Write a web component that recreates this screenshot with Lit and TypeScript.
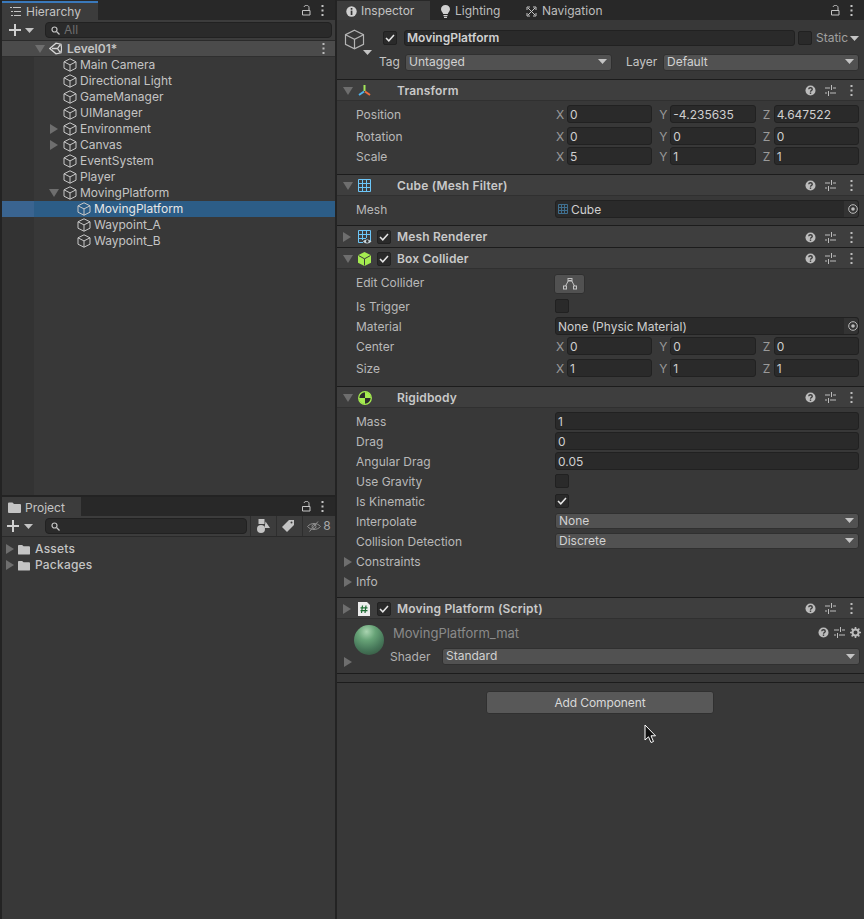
import { LitElement, html, css } from "lit";
import { customElement } from "lit/decorators.js";

const triD = (c = "#6e6e6e") => html`<svg class="ic" width="10" height="8" viewBox="0 0 10 8"><path d="M0 0H10L5 8Z" fill=${c}/></svg>`;
const triR = (c = "#6e6e6e") => html`<svg class="ic" width="8" height="10" viewBox="0 0 8 10"><path d="M0 0V10L8 5Z" fill=${c}/></svg>`;
const triS = (c = "#c4c4c4") => html`<svg class="ic" width="9" height="5" viewBox="0 0 9 5"><path d="M0 0H9L4.5 5Z" fill=${c}/></svg>`;
const cube = (s = 14, c = "#c8c8c8", sw = 1) => html`<svg class="ic" width=${s} height=${s} viewBox="0 0 14 14" fill="none" stroke=${c} stroke-width=${sw}><path d="M7 .8 13 3.800V10.200L7 13.200 1 10.200V3.800Z M1 3.800 7 6.900 13 3.800 M7 6.900V13.200"/></svg>`;
const help = () => html`<svg class="ic" width="11" height="11" viewBox="0 0 11 11"><circle cx="5.500" cy="5.500" r="5" fill="#bcbcbc"/><path d="M3.700 4.200C3.800 2.200 7.300 2.300 7.300 4.200 7.300 5.400 5.500 5.300 5.500 6.700" fill="none" stroke="#3a3a3a" stroke-width="1.300"/><rect x="4.800" y="7.500" width="1.400" height="1.400" fill="#3a3a3a"/></svg>`;
const sliders = () => html`<svg class="ic" width="11" height="11" viewBox="0 0 11 11" fill="#bcbcbc"><rect x="0" y="2.500" width="5" height="1"/><rect x="8" y="2.500" width="3" height="1"/><rect x="6" y="0" width="1" height="5"/><rect x="0" y="7.500" width="2" height="1"/><rect x="5" y="7.500" width="6" height="1"/><rect x="3" y="6" width="1" height="5"/></svg>`;
const dots = (c = "#bcbcbc") => html`<svg class="ic" width="3" height="11" viewBox="0 0 3 11" fill=${c}><rect x=".5" y="0" width="2" height="2"/><rect x=".5" y="4.500" width="2" height="2"/><rect x=".5" y="9" width="2" height="2"/></svg>`;
const lock = () => html`<svg class="ic" width="9" height="11" viewBox="0 0 9 11" fill="none" stroke="#c4c4c4"><path d="M.5 5.500H8V10H.5Z"/><path d="M7 5V2.500C7 -.2 2.500 -.2 2 2"/></svg>`;
const plus = () => html`<svg class="ic" width="12" height="12" viewBox="0 0 12 12" fill="#d0d0d0"><rect x="5" width="2" height="12"/><rect y="5" width="12" height="2"/></svg>`;
const searchIc = () => html`<svg class="ic" width="9" height="9" viewBox="0 0 9 9" fill="none" stroke="#c4c4c4" stroke-width="1.200"><circle cx="3.500" cy="3.500" r="2.500"/><path d="M5.500 5.500 8.500 8.500"/></svg>`;
const folder = (w = 13) => html`<svg class="ic" width=${w} height="11" viewBox="0 0 13 11" fill="#c4c4c4"><path d="M0 1.500Q0 .5 1 .5H4.500L6 2H12Q13 2 13 3V10Q13 11 12 11H1Q0 11 0 10Z"/></svg>`;
const unity = () => html`<svg class="ic" width="13" height="13" viewBox="0 0 13 13" fill="none" stroke="#d6d6d6" stroke-width="1.300"><path d="M.8 6.500 7 1.200 12 2.200 12.600 6.500 12 10.800 7 11.800Z M3 6.500H8.500L11 2.800 M8.500 6.500 11 10.200"/></svg>`;
const hierIc = () => html`<svg class="ic" width="11" height="9" viewBox="0 0 11 9" fill="#c4c4c4"><rect x="0" y="0" width="2" height="1"/><rect x="3" y="0" width="8" height="1"/><rect x="1" y="4" width="2" height="1"/><rect x="4" y="4" width="7" height="1"/><rect x="1" y="8" width="2" height="1"/><rect x="4" y="8" width="7" height="1"/></svg>`;
const info = () => html`<svg class="ic" width="11" height="11" viewBox="0 0 11 11"><circle cx="5.500" cy="5.500" r="5.200" fill="#d0d0d0"/><rect x="4.700" y="2" width="1.700" height="1.700" fill="#333"/><rect x="4.700" y="4.600" width="1.700" height="4.400" fill="#333"/></svg>`;
const bulb = () => html`<svg class="ic" width="9" height="13" viewBox="0 0 9 13" fill="#d0d0d0"><path d="M4.500 0C1.800 0 0 1.900 0 4.300 0 6.200 1.700 7.300 2.200 9H6.800C7.300 7.300 9 6.200 9 4.300 9 1.900 7.200 0 4.500 0Z"/><rect x="2.500" y="10" width="4" height="1.200"/><rect x="3" y="11.800" width="3" height="1.200"/></svg>`;
const navIc = () => html`<svg class="ic" width="11" height="11" viewBox="0 0 11 11" fill="none" stroke="#c4c4c4"><path d="M1 4V1H4 M7 1H10V4 M10 7V10H7 M4 10H1V7 M2 2 9 9 M9 2 2 9"/></svg>`;
const transformIc = () => html`<svg class="ic" width="13" height="13" viewBox="0 0 13 13" fill="none" stroke-width="2"><path d="M6.500 7V1" stroke="#a3e75a"/><path d="M6 7.500 1 11" stroke="#4fb4ef"/><path d="M7 7.500 12 11" stroke="#ef6e3c"/></svg>`;
const gridIc = () => html`<svg class="ic" width="13" height="13" viewBox="0 0 13 13" fill="none" stroke="#6cc6f8"><path d="M.5 .5H12.500V12.500H.5Z M4.500 .5V12.500 M8.500 .5V12.500 M.5 4.500H12.500 M.5 8.500H12.500"/></svg>`;
const rendererIc = () => html`<svg class="ic" width="14" height="14" viewBox="0 0 14 14" fill="none"><path stroke="#6cc6f8" d="M.5 .5H12.500V11 M.5 .5V12.500H5 M4.500 .5V10 M8.500 .5V8 M.5 4.500H12.500 M.5 8.500H8"/><path d="M5 11.500C7 8.800 11 8.800 13.500 11.500 11 14 7 14 5 11.500Z" fill="#c8d6de"/><circle cx="9.300" cy="11.400" r="1.300" fill="#333"/></svg>`;
const boxIc = () => html`<svg class="ic" width="13" height="14" viewBox="0 0 13 14"><path d="M6.500 0 13 3.300V10.700L6.500 14 0 10.700V3.300Z" fill="#a5ec50"/><path d="M.5 3.500 6.500 6.800 12.500 3.500 M6.500 6.800V13.500" fill="none" stroke="#3a3a3a"/></svg>`;
const rigidIc = () => html`<svg class="ic" width="14" height="14" viewBox="0 0 14 14"><circle cx="7" cy="7" r="6.300" fill="#2c2c2c" stroke="#a5ec50" stroke-width="1.300"/><path d="M7 1A6 6 0 0 1 13 7H7Z M7 13A6 6 0 0 1 1 7H7Z" fill="#a5ec50"/></svg>`;
const scriptIc = () => html`<svg class="ic" width="12" height="14" viewBox="0 0 12 14"><path d="M0 0H9L12 3V14H0Z" fill="#ececec"/><path d="M4.500 3.500 3.500 11 M8 3.500 7 11 M2.500 5.800H9.500 M2.500 8.700H9.500" stroke="#1d6b33" stroke-width="1.200" fill="none"/></svg>`;
const check = () => html`<svg class="ic" width="10" height="8" viewBox="0 0 10 8" fill="none" stroke="#e6e6e6" stroke-width="1.500"><path d="M1 4 3.800 6.800 9 1"/></svg>`;
const target = () => html`<svg class="ic" width="10" height="10" viewBox="0 0 10 10"><circle cx="5" cy="5" r="4.300" fill="none" stroke="#bcbcbc"/><circle cx="5" cy="5" r="1.800" fill="#bcbcbc"/></svg>`;
const gear = () => html`<svg class="ic" width="11" height="11" viewBox="0 0 11 11"><circle cx="5.500" cy="5.500" r="3" fill="none" stroke="#bcbcbc" stroke-width="2"/><path d="M5.500 0V11 M0 5.500H11 M1.600 1.600 9.400 9.400 M9.400 1.600 1.600 9.400" stroke="#bcbcbc" stroke-width="1.600" stroke-dasharray="2 7"/></svg>`;
const colliderIc = () => html`<svg class="ic" width="14" height="12" viewBox="0 0 14 12" fill="none" stroke="#c4c4c4"><path d="M2.500 8 5.500 2.500H8.500L11.500 8"/><rect x=".5" y="8" width="3" height="3"/><rect x="10.500" y="8" width="3" height="3"/><rect x="5" y=".5" width="4" height="2.500"/></svg>`;
const shapesIc = () => html`<svg class="ic" width="13" height="14" viewBox="0 0 13 14" fill="#c4c4c4"><rect x="1.500" y="0" width="6" height="5"/><circle cx="4" cy="10" r="4"/><path d="M8.500 2.500 13 9H7.500Z"/></svg>`;
const tagIc = () => html`<svg class="ic" width="12" height="12" viewBox="0 0 12 12"><path d="M7 0H12V5L5 12 0 7Z" fill="#c4c4c4"/><circle cx="9.500" cy="2.500" r="1" fill="#3c3c3c"/></svg>`;
const eyeOff = () => html`<svg class="ic" width="14" height="11" viewBox="0 0 14 11" fill="none" stroke="#8f8f8f"><path d="M.5 5.500C4 1.500 10 1.500 13.500 5.500 10 9.500 4 9.500 .5 5.500Z"/><circle cx="7" cy="5.500" r="2"/><path d="M2.500 10.500 11 .5"/></svg>`;

type Node = { n: string; d: number; fold?: "r" | "d"; sel?: boolean };
const tree: Node[] = [
  { n: "Main Camera", d: 0 }, { n: "Directional Light", d: 0 }, { n: "GameManager", d: 0 }, { n: "UIManager", d: 0 },
  { n: "Environment", d: 0, fold: "r" }, { n: "Canvas", d: 0, fold: "r" }, { n: "EventSystem", d: 0 }, { n: "Player", d: 0 },
  { n: "MovingPlatform", d: 0, fold: "d" }, { n: "MovingPlatform", d: 1, sel: true }, { n: "Waypoint_A", d: 1 }, { n: "Waypoint_B", d: 1 },
];

@customElement("app-root")
export class AppRoot extends LitElement {
  static styles = css`
    :host { display: block; width: 864px; height: 919px; overflow: hidden; position: relative; background: #232323;
      font: 12px/16px Inter, "Liberation Sans", sans-serif; color: #c4c4c4; letter-spacing: 0; }
    * { box-sizing: border-box; }
    .ic { display: block; flex: none; }
    .root { display: flex; height: 919px; }
    .left { width: 333px; margin-left: 2px; display: flex; flex-direction: column; gap: 2px; flex: none; }
    .panel { display: flex; flex-direction: column; background: #383838; }
    .hier { height: 495px; }
    .proj { flex: 1; }
    .insp { width: 527px; margin-left: 2px; flex: none; }
    .tabbar { height: 20px; padding-top: 1px; background: #282828; display: flex; align-items: stretch; flex: none; }
    .proj .tabbar { height: 19px; padding-top: 0; }
    .tab { display: flex; align-items: center; gap: 5px; padding-left: 9px; padding-top: 1px; }
    .tab.on { background: #3c3c3c; }
    .hier .tab.on { width: 96px; border-top: 2px solid #3a79bb; padding-left: 8px; padding-top: 0; }
    .proj .tab.on { width: 79px; padding-left: 6px; gap: 4px; padding-top: 2px; }
    .insp .tab.on { width: 93px; padding-left: 9px; gap: 4px; }
    .tab.off { padding-left: 0; margin-left: 11px; color: #bdbdbd; }
    .tab.off.first { width: 74px; }
    .spring { flex: 1; }
    .tabicons { display: flex; align-items: center; gap: 10px; padding-right: 11px; padding-bottom: 1px; }
    .toolbar { height: 21px; background: #3c3c3c; border-bottom: 1px solid #2a2a2a; display: flex; align-items: center; flex: none; padding-left: 7px; }
    .proj .toolbar { padding-left: 5px; }
    .proj .toolbar .tri { margin-left: 5px; width: 27px; }
    .toolbar .tri { margin-left: 4px; width: 26px; }
    .search { height: 16px; background: #2a2a2a; border: 1px solid #212121; border-radius: 4px; display: flex; align-items: center; gap: 4px; padding-left: 5px; color: #6f6f6f; flex: none; }
    .hier .search { width: 287px; margin-left: -6px; }
    .proj .search { width: 202px; margin-left: -6px; }
    .tb { height: 20px; width: 26px; border-left: 1px solid #2e2e2e; display: flex; align-items: center; justify-content: center; gap: 2px; flex: none; }
    .tb.first { margin-left: 3px; }
    .tb.t { padding-right: 3px; }
    .tb.w { width: 33px; color: #a8a8a8; }
    .scene { height: 16px; background: #4b4b4b; border-bottom: 1px solid #2f2f2f; display: flex; align-items: center; padding-left: 33px; padding-right: 10px; font-weight: 600; flex: none; }
    .scene .u { margin: 0 5px 0 4px; }
    .tree { flex: 1; background: linear-gradient(to right, #333 32px, #383838 32px); }
    .node { height: 16px; display: flex; align-items: center; }
    .node.sel { color: #e6e6e6; background: linear-gradient(to right, #3a6490 32px, #2c5d87 32px); }
    .fold { width: 10px; display: flex; justify-content: center; flex: none; }
    .node .gap { margin-left: 4px; }
    .node .label { margin-left: 3px; }
    .assets { padding-top: 4px; }
    .assets .node { padding-left: 3px; font-weight: 500; letter-spacing: .2px; }
    .assets .fold { margin-right: 3px; }
    .assets .label { margin-left: 5px; }

    .top { height: 60px; flex: none; padding-top: 10px; display: flex; flex-direction: column; gap: 8px; }
    .toprow { display: flex; align-items: center; height: 16px; }
    .topcube { width: 46px; padding-left: 7px; display: flex; height: 16px; }
    .topcube .big { margin-top: -1px; }
    .topcube .drop { margin: 20px 0 0 -2px; }
    .name { width: 391px; height: 16px; margin-left: 7px; background: #2a2a2a; border: 1px solid #212121; border-radius: 3px; font-weight: 600; padding-left: 2px; line-height: 14px; color: #d0d0d0; }
    .static { margin-left: 3px; display: flex; align-items: center; gap: 4px; color: #a0a0a0; }
    .static .ic:last-child { margin-left: -2px; }
    .tag { padding-left: 42px; }
    .dd { height: 17px; background: #515151; border: 1px solid #303030; border-radius: 3px; display: flex; align-items: center; justify-content: space-between; padding: 0 4px 1px 3px; line-height: 14px; color: #d2d2d2; }
    .tagdd { width: 207px; margin-left: 5px; }
    .layer { margin-left: 14px; width: 37px; }
    .layerdd { width: 196px; }
    .sec { border-bottom: 1px solid #1c1c1c; }
    .hdr { height: 21px; background: #3e3e3e; border-bottom: 1px solid #303030; display: flex; align-items: center; padding-right: 11px; padding-top: 1px; }
    .hdr.closed { border-bottom: 0; }
    .hdr .t { font-weight: 600; color: #c9c9c9; letter-spacing: .17px; margin-left: 6px; }
    .hdr .slot1 { width: 21px; padding-left: 6px; display: flex; flex: none; }
    .hdr .slot3 { width: 19px; flex: none; display: flex; }
    .hdr .slot2 { width: 14px; display: flex; flex: none; }
    .hdr .ricons { margin-left: auto; display: flex; align-items: center; gap: 9px; }
    .hdr .ricons .ic:last-child { margin-left: 5px; }
    .cb { width: 14px; height: 14px; background: #2a2a2a; border: 1px solid #212121; border-radius: 2px; display: flex; align-items: center; justify-content: center; flex: none; }
    .body { padding-top: 4px; }
    .row { display: flex; align-items: flex-start; padding-left: 19px; line-height: 20px; }
    .lbl { width: 199px; flex: none; color: #b8b8b8; }
    .lbl2 { display: flex; align-items: center; width: 218px; margin-left: -19px; color: #b8b8b8; }
    .lbl2 .fold { width: 19px; padding-left: 2px; }
    .vec { display: flex; gap: 6px; width: 304px; }
    .vi { display: flex; align-items: flex-start; flex: 1; }
    .vi span.ax { width: 12px; flex: none; padding-left: 1px; color: #9a9a9a; }
    .field { flex: 1; height: 18px; background: #2a2a2a; border: 1px solid #212121; border-radius: 3px; padding-left: 2px; line-height: 17px; color: #cfcfcf; }
    .wide { width: 304px; flex: none; }
    .obj { display: flex; align-items: center; gap: 3px; position: relative; }
    .obj .tg { position: absolute; right: 0; top: 0; bottom: 0; width: 14px; display: flex; align-items: center; justify-content: flex-end; background: #333; border-radius: 0 3px 3px 0; }
    .rowdd { width: 304px; height: 16px; margin-top: 1px; }
    .cbwrap { margin-top: 2px; }
    .btn { width: 31px; height: 20px; margin-top: 1px; margin-left: -1px; background: #515151; border: 1px solid #303030; border-radius: 3px; display: flex; align-items: center; justify-content: center; }
    .mat { display: grid; grid-template-columns: 17px 36px 1fr; height: 54px; }
    .mat .tr { align-self: end; padding: 0 0 6px 7px; }
    .mat .ball { width: 30px; height: 30px; border-radius: 50%; margin-top: 6px; background: radial-gradient(circle at 42% 22%, #a9d4b0 0, #67a377 30%, #47785a 62%, #2f4a38 100%); }
    .mat .rc { display: flex; flex-direction: column; padding-right: 4px; }
    .mat .r1 { display: flex; align-items: flex-start; padding-top: 6px; padding-left: 3px; height: 29px; color: #8a8a8a; font-size: 13px; justify-content: space-between; }
    .mat .r1 .mi { display: flex; align-items: center; gap: 5px; margin: 2px -1px 0 0; }
    .mat .r2 { display: flex; align-items: flex-start; }
    .mat .r2 .sl { width: 52px; color: #b0b0b0; padding-top: 1px; }
    .matdd { width: 418px; height: 17px; }
    .band { height: 9px; border-bottom: 1px solid #1c1c1c; }
    .foot { display: flex; justify-content: center; padding-top: 8px; margin-left: -1px; }
    .add { width: 228px; height: 23px; background: #585858; border: 1px solid #303030; border-radius: 3px; display: flex; align-items: center; justify-content: center; color: #d8d8d8; letter-spacing: -.1px; }
    .cursor { position: absolute; left: 644px; top: 724px; }
  `;

  private tabicons() { return html`<div class="spring"></div><div class="tabicons">${lock()}${dots("#c4c4c4")}</div>`; }
  private ricons() { return html`<div class="ricons">${help()}${sliders()}${dots()}</div>`; }
  private header(title: string, icon: unknown, opts: { open?: boolean; check?: boolean; closed?: boolean } = {}) {
    return html`<div class="hdr ${opts.closed ? "closed" : ""}">
      <div class="slot1">${opts.open ? triD() : triR()}</div>
      <div class="slot3">${icon}</div>
      <div class="slot2">${opts.check ? html`<div class="cb">${check()}</div>` : ""}</div>
      <div class="t">${title}</div>${this.ricons()}</div>`;
  }
  private vec(label: string, v: string[], h: number) {
    return html`<div class="row" style="height:${h}px"><div class="lbl">${label}</div><div class="vec">
      ${["X", "Y", "Z"].map((a, i) => html`<div class="vi"><span class="ax">${a}</span><div class="field">${v[i]}</div></div>`)}
    </div></div>`;
  }
  private fieldRow(label: string, v: string) {
    return html`<div class="row" style="height:20px"><div class="lbl">${label}</div><div class="field wide">${v}</div></div>`;
  }
  private cbRow(label: string, on: boolean) {
    return html`<div class="row" style="height:20px"><div class="lbl">${label}</div><div class="cbwrap"><div class="cb">${on ? check() : ""}</div></div></div>`;
  }
  private ddRow(label: string, v: string) {
    return html`<div class="row" style="height:20px"><div class="lbl">${label}</div><div class="dd rowdd"><span>${v}</span>${triS()}</div></div>`;
  }
  private objRow(label: string, v: string, icon: unknown, h: number) {
    return html`<div class="row" style="height:${h}px"><div class="lbl">${label}</div><div class="field wide obj">${icon}<span>${v}</span><div class="tg">${target()}</div></div></div>`;
  }

  render() {
    return html`<div class="root">
      <div class="left">
        <section class="panel hier">
          <div class="tabbar"><div class="tab on">${hierIc()}<span>Hierarchy</span></div>${this.tabicons()}</div>
          <div class="toolbar">${plus()}<div class="tri">${triS()}</div><div class="search">${searchIc()}<span>All</span></div></div>
          <div class="scene"><div class="fold">${triD()}</div><div class="u">${unity()}</div><span>Level01*</span><div class="spring"></div>${dots()}</div>
          <div class="tree">
            ${tree.map((t) => html`<div class="node ${t.sel ? "sel" : ""}" style="padding-left:${47 + t.d * 14}px">
              <div class="fold">${t.fold === "r" ? triR() : t.fold === "d" ? triD() : ""}</div><div class="gap">${cube()}</div><span class="label">${t.n}</span></div>`)}
          </div>
        </section>
        <section class="panel proj">
          <div class="tabbar"><div class="tab on">${folder()}<span>Project</span></div>${this.tabicons()}</div>
          <div class="toolbar">${plus()}<div class="tri">${triS()}</div><div class="search">${searchIc()}</div>
            <div class="tb first">${shapesIc()}</div><div class="tb t">${tagIc()}</div><div class="tb w">${eyeOff()}<span>8</span></div></div>
          <div class="assets">
            <div class="node"><div class="fold">${triR()}</div>${folder(12)}<span class="label">Assets</span></div>
            <div class="node"><div class="fold">${triR()}</div>${folder(12)}<span class="label">Packages</span></div>
          </div>
        </section>
      </div>
      <section class="panel insp">
        <div class="tabbar">
          <div class="tab on">${info()}<span>Inspector</span></div>
          <div class="tab off first">${bulb()}<span>Lighting</span></div>
          <div class="tab off">${navIc()}<span>Navigation</span></div>
          ${this.tabicons()}
        </div>
        <div class="sec top">
          <div class="toprow">
            <div class="topcube"><div class="big">${cube(21, "#b4b4b4", 0.8)}</div><div class="drop">${triS()}</div></div>
            <div class="cb">${check()}</div>
            <div class="name">MovingPlatform</div>
            <div class="static"><div class="cb"></div><span>Static</span>${triS()}</div>
          </div>
          <div class="toprow tag"><span>Tag</span><div class="dd tagdd"><span>Untagged</span>${triS()}</div>
            <span class="layer">Layer</span><div class="dd layerdd"><span>Default</span>${triS()}</div></div>
        </div>
        <div class="sec">
          ${this.header("Transform", transformIc(), { open: true })}
          <div class="body" style="height:73px">
            ${this.vec("Position", ["0", "-4.235635", "4.647522"], 22)}
            ${this.vec("Rotation", ["0", "0", "0"], 20)}
            ${this.vec("Scale", ["5", "1", "1"], 20)}
          </div>
        </div>
        <div class="sec">
          ${this.header("Cube (Mesh Filter)", gridIc(), { open: true })}
          <div class="body" style="height:29px">${this.objRow("Mesh", "Cube", html`<svg class="ic" width="10" height="10" viewBox="0 0 10 10" fill="none" stroke="#3f6f8f"><path d="M.5 .5H9.500V9.500H.5Z M3.500 .5V9.500 M6.500 .5V9.500 M.5 3.500H9.500 M.5 6.500H9.500"/></svg>`, 20)}</div>
        </div>
        <div class="sec">${this.header("Mesh Renderer", rendererIc(), { check: true, closed: true })}</div>
        <div class="sec">
          ${this.header("Box Collider", boxIc(), { open: true, check: true })}
          <div class="body" style="height:117px">
            <div class="row" style="height:24px"><div class="lbl">Edit Collider</div><div class="btn">${colliderIc()}</div></div>
            ${this.cbRow("Is Trigger", false)}
            ${this.objRow("Material", "None (Physic Material)", "", 20)}
            ${this.vec("Center", ["0", "0", "0"], 22)}
            ${this.vec("Size", ["1", "1", "1"], 20)}
          </div>
        </div>
        <div class="sec">
          ${this.header("Rigidbody", rigidIc(), { open: true })}
          <div class="body" style="height:189px">
            ${this.fieldRow("Mass", "1")}
            ${this.fieldRow("Drag", "0")}
            ${this.fieldRow("Angular Drag", "0.05")}
            ${this.cbRow("Use Gravity", false)}
            ${this.cbRow("Is Kinematic", true)}
            ${this.ddRow("Interpolate", "None")}
            ${this.ddRow("Collision Detection", "Discrete")}
            <div class="row" style="height:20px"><div class="lbl2"><div class="fold">${triR()}</div>Constraints</div></div>
            <div class="row" style="height:20px"><div class="lbl2"><div class="fold">${triR()}</div>Info</div></div>
          </div>
        </div>
        <div class="sec">${this.header("Moving Platform (Script)", scriptIc(), { check: true })}
          <div class="mat">
            <div class="tr">${triR()}</div>
            <div class="ball"></div>
            <div class="rc">
              <div class="r1"><span>MovingPlatform_mat</span><div class="mi">${help()}${sliders()}${gear()}</div></div>
              <div class="r2"><span class="sl">Shader</span><div class="dd matdd"><span>Standard</span>${triS()}</div></div>
            </div>
          </div>
        </div>
        <div class="band"></div>
        <div class="foot"><div class="add">Add Component</div></div>
      </section>
    </div>
    <svg class="cursor" width="13" height="20" viewBox="0 0 13 20"><path d="M1 1V16L4.500 12.800 7 18.500 9.500 17.500 7 11.800H11.500Z" fill="#111" stroke="#fff" stroke-width="1"/></svg>`;
  }
}
